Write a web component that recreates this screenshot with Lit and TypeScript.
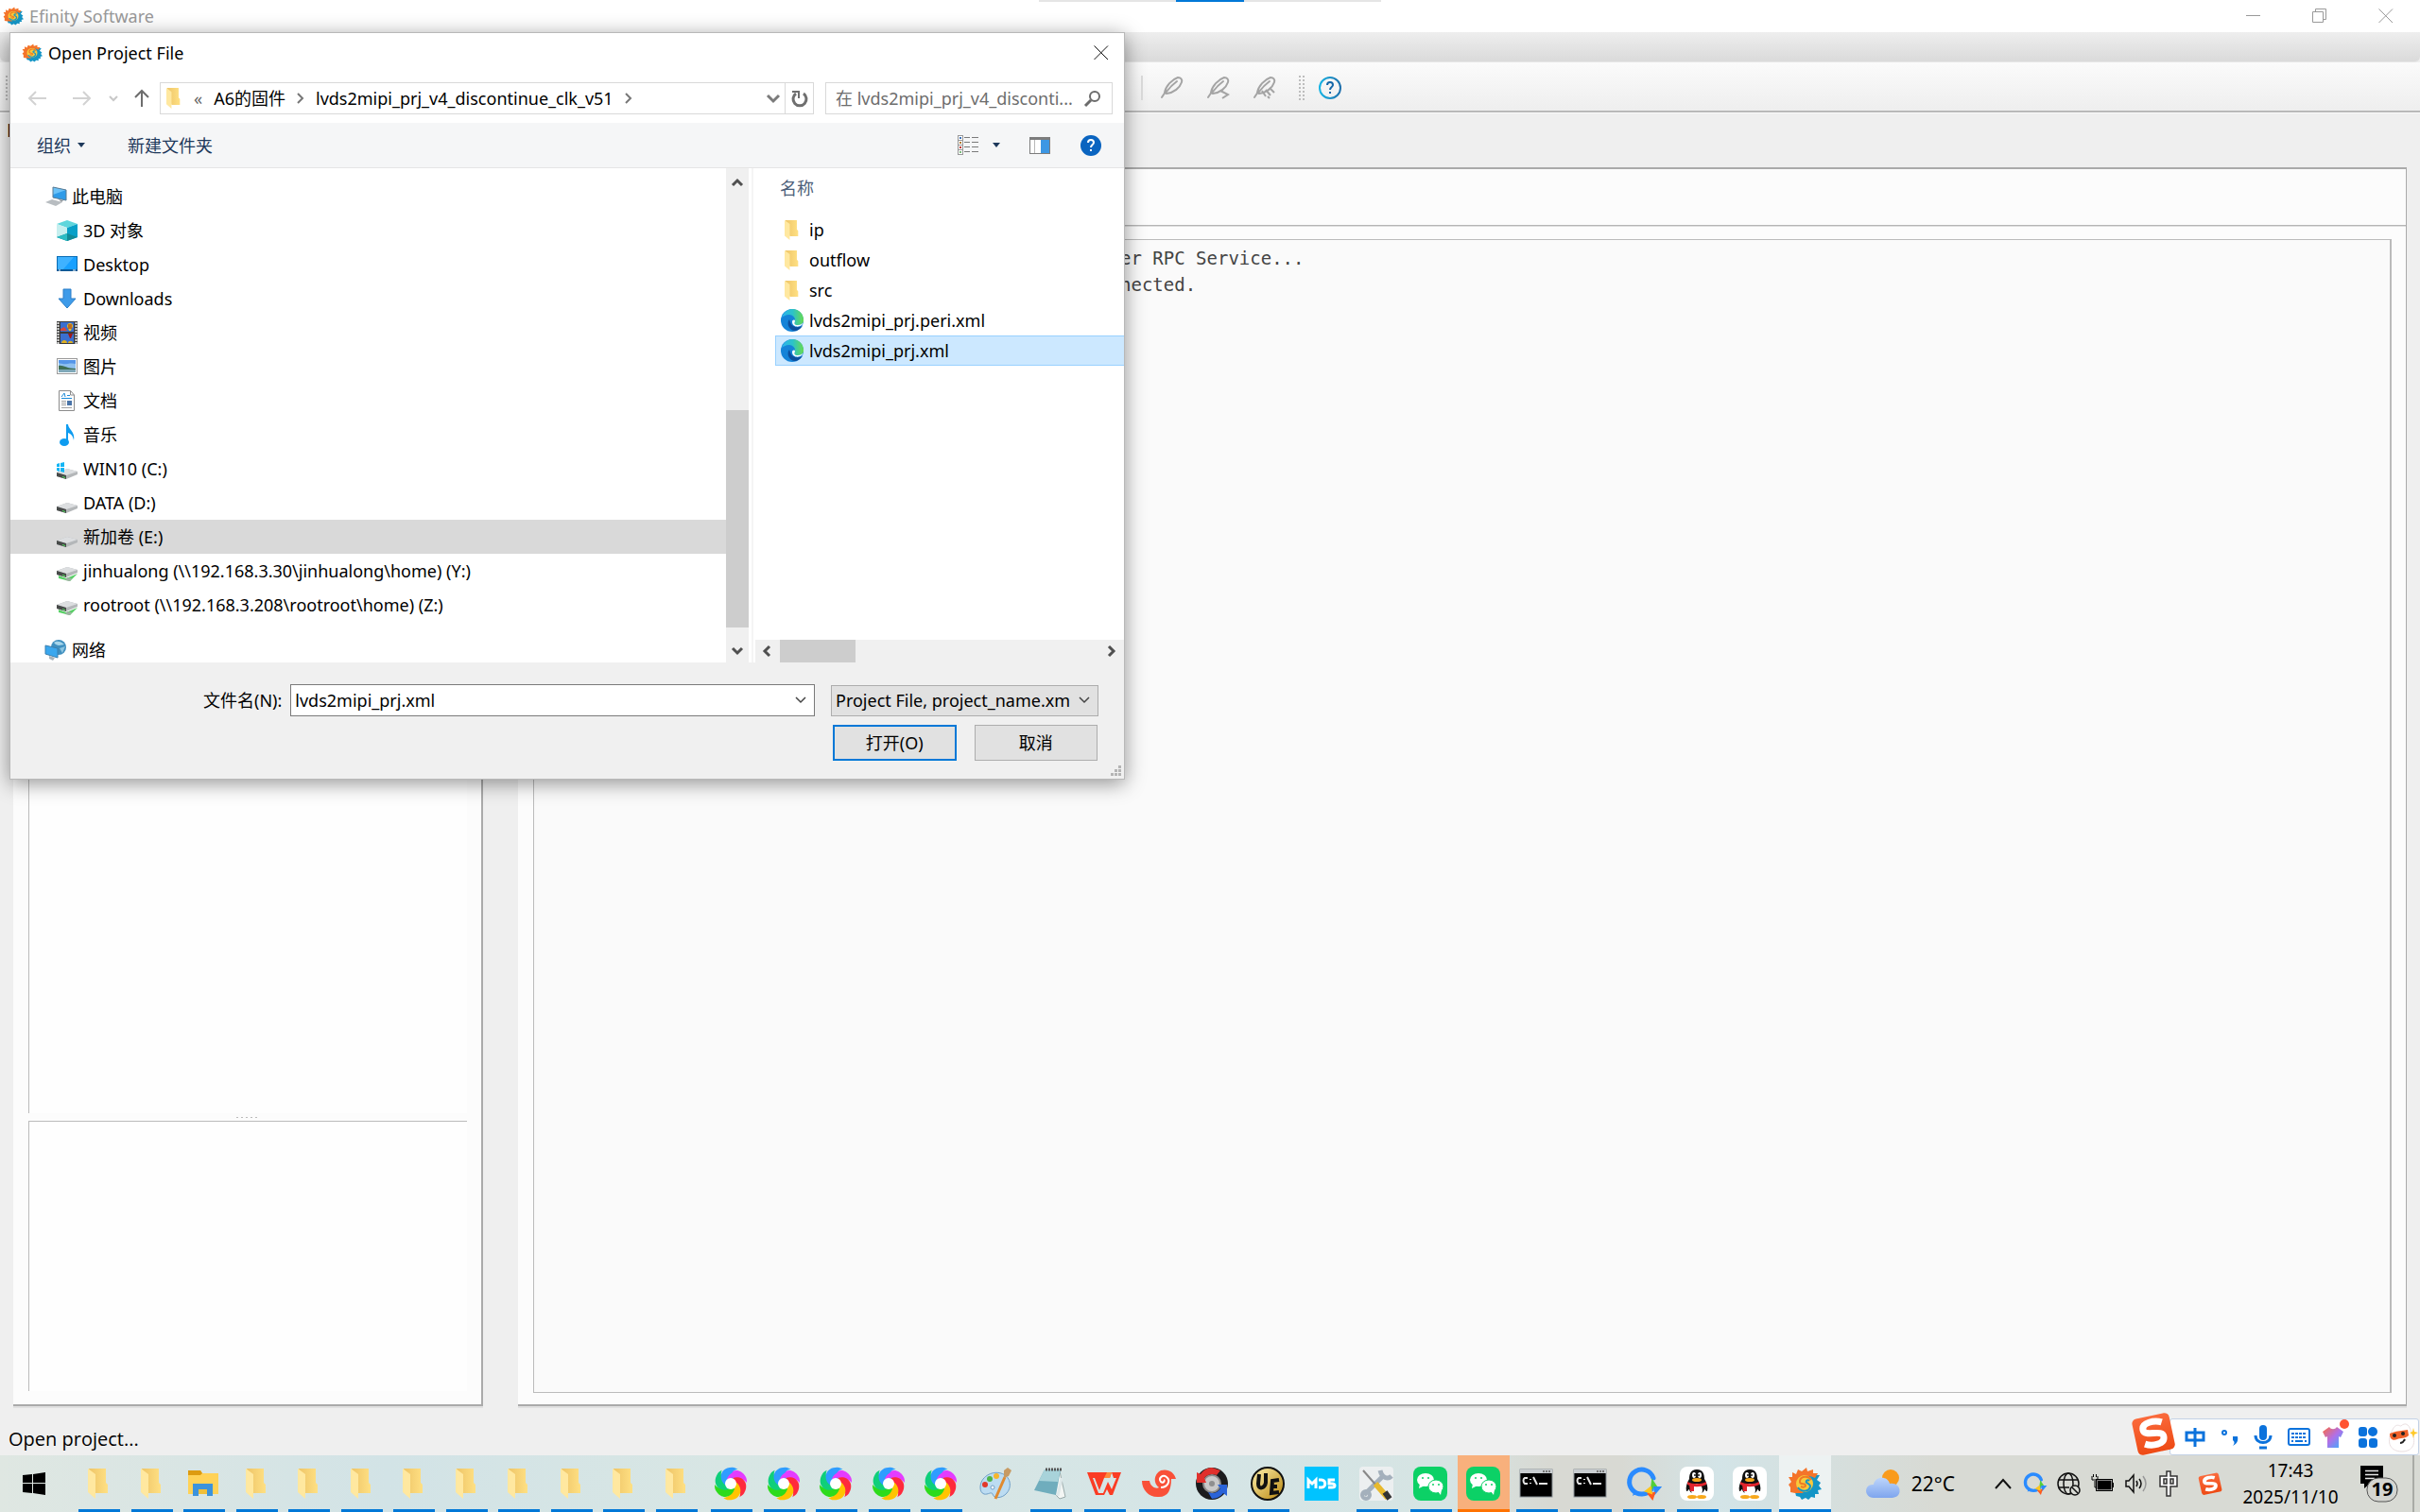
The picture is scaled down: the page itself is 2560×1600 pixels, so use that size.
import { LitElement, html, svg, css, type TemplateResult } from "lit";
import { customElement, state } from "lit/decorators.js";
import { classMap } from "lit/directives/class-map.js";

type Glyph = [number, number, TemplateResult];

const drive = svg`
  <path d="M0 16 L11 12 L22 15 V18 L10 23 L0 20 Z" fill="#b4b7b9"/>
  <path d="M0 16 L11 12 L22 15 L10 19 Z" fill="#dcdee0"/>
  <path d="M0 16 L10 19 V23 L0 20 Z" fill="#474a49"/>
  <path d="M6 20 L9 21 V22 L6 21 Z" fill="#4fe05a"/>`;

const petals = ["#e43cff", "#ff2a3c", "#ffc400", "#2edb1c", "#0fcf7a", "#2f9dff"];

const bubble = svg`
  <path d="M27 24 A13 13 0 1 1 29 12" fill="none" stroke="#2a8bff" stroke-width="5" stroke-linecap="round"/>
  <path d="M9 25 L7 31 L14 27 Z" fill="#2a8bff"/>
  <path d="M28 15 L32 21 L27 23 Z" fill="#53cf3a" stroke="#53cf3a" stroke-width="2"/>
  <path d="M36 22 L31 28 L30 22 Z" fill="#2a8bff" stroke="#2a8bff" stroke-width="2"/>
  <path d="M28 34 L24 29 L30 28 Z" fill="#ff5a1f" stroke="#ff5a1f" stroke-width="2"/>
  <path d="M21 26 L26 22 L27 28 Z" fill="#ffc61a" stroke="#ffc61a" stroke-width="2"/>`;

const feather = svg`
  <path d="M1 22 L5 16 M4 17 C5 10 12 3 18 1 C21 1 23 3 22 6 C20 12 14 17 6 18 Z M6 16 C9 12 13 8 17 5"
    fill="none" stroke="#a4a4a4" stroke-width="2" stroke-linecap="round" stroke-linejoin="round"/>`;

const sogou = svg`
  <g transform="rotate(-12 24 23)">
    <rect x="4" y="4" width="40" height="39" rx="5" fill="url(#g-sogou)"/>
    <path d="M35 13 C28 9 14 9 14 17 C14 25 34 20 34 28 C34 37 20 36 13 32" fill="none" stroke="#fff" stroke-width="7"/>
  </g>`;

const glyphs: Record<string, Glyph> = {
  efinity: [36, 36, svg`
    <path d="M34 9 L31 14 L35 17 L33 20 L36 24 L32 25 L33 29 L29 29 L29 33 L25 32 L22 35 L19 33 L15 35 L13 32 L9 31 L8 27 L20 8 Z" fill="#1495c6"/>
    <path d="M3 27 L3 22 L1 19 L4 16 L1 11 L5 11 L5 6 L9 8 L11 3 L15 5 L20 1 L21 5 L27 3 L27 7 L32 7 L29 12 C22 8 14 10 12 16 C11 22 13 25 17 28 L8 28 Z" fill="#f4742a"/>
    <circle cx="18" cy="18" r="9" fill="#f8c93c"/>
    <path d="M25 14 C22 9 14 10 13 15 C12 20 19 17 19 20 C19 22 16 22 14 21" fill="none" stroke="#ee7a24" stroke-width="2"/>
    <path d="M11 22 C14 27 23 27 24 21 C24 17 18 18 20 15 C21 14 22 14 23 15" fill="none" stroke="#1495c6" stroke-width="2"/>`],
  minimize: [16, 16, svg`<path d="M0 7.500 H15" stroke="#999"/>`],
  restore: [16, 16, svg`<path d="M.5 3.500 H11.500 V14.500 H.5 Z M3.500 3 V.5 H14.500 V11.500 H12" fill="none" stroke="#999"/>`],
  closeGrey: [16, 16, svg`<path d="M.5 .5 L15 15 M15 .5 L.5 15" stroke="#999"/>`],
  close: [16, 16, svg`<path d="M.5 .5 L15 15 M15 .5 L.5 15" stroke="#111"/>`],
  feather: [24, 24, feather],
  featherMinus: [24, 24, svg`${feather}<path d="M14 15 L22 19 L16 23" fill="none" stroke="#a4a4a4" stroke-width="2"/>`],
  featherLines: [24, 24, svg`${feather}<path d="M9 15 L13 21 M13 14 L18 20 M17 12 L22 17 M15 21 L17 23" fill="none" stroke="#a4a4a4" stroke-width="2"/>`],
  helpRing: [24, 24, svg`<circle cx="12" cy="12" r="11" fill="none" stroke="url(#g-ring)" stroke-width="2"/>
    <path d="M9 9 C9 5 15 5 15 9 C15 11 12 11 12 14" fill="none" stroke="#1466a8" stroke-width="2"/><rect x="11" y="16" width="2" height="2" fill="#1466a8"/>`],
  back: [20, 16, svg`<path d="M19 8 H2 M8 1 L1 8 L8 15" fill="none" stroke="#d2d2d2" stroke-width="2"/>`],
  forward: [20, 16, svg`<path d="M1 8 H18 M12 1 L19 8 L12 15" fill="none" stroke="#d2d2d2" stroke-width="2"/>`],
  recent: [10, 8, svg`<path d="M1 2 L5 6 L9 2" fill="none" stroke="#c8c8c8" stroke-width="2"/>`],
  up: [16, 18, svg`<path d="M8 18 V2 M1 8 L8 1 L15 8" fill="none" stroke="#6d6d6d" stroke-width="2"/>`],
  chevRight: [8, 12, svg`<path d="M1 1 L6 6 L1 11" fill="none" stroke="#777" stroke-width="2"/>`],
  chevDown: [14, 10, svg`<path d="M1 2 L7 8 L13 2" fill="none" stroke="#7b7b7b" stroke-width="3"/>`],
  comboDown: [12, 8, svg`<path d="M1 1 L6 6 L11 1" fill="none" stroke="#444" stroke-width="1.500"/>`],
  refresh: [18, 18, svg`<path d="M13 4 A7 7 0 1 1 5 4" fill="none" stroke="#6f6f6f" stroke-width="3"/><path d="M1 2 H8 V9" fill="none" stroke="#6f6f6f" stroke-width="2"/>`],
  search: [18, 18, svg`<circle cx="11" cy="7" r="5" fill="none" stroke="#6b6b6b" stroke-width="2"/><path d="M7 11 L1 17" stroke="#6b6b6b" stroke-width="3"/>`],
  caret: [10, 6, svg`<path d="M1 0 H9 L5 5 Z" fill="#1e395b"/>`],
  view: [22, 22, svg`<rect x=".5" y=".5" width="5" height="20" fill="#fff" stroke="#989898"/>
    <path d="M1 5.500 H5 M1 10.500 H5 M1 15.500 H5" stroke="#989898"/>
    <rect x="2" y="2" width="2" height="2" fill="#3f73b8"/><rect x="2" y="7" width="2" height="2" fill="#b07a2c"/><rect x="2" y="12" width="2" height="2" fill="#c03028"/><rect x="2" y="17" width="2" height="2" fill="#7ab97a"/>
    <path d="M7 2.500 H13 M15 2.500 H22 M7 7.500 H13 M15 7.500 H22 M7 12.500 H13 M15 12.500 H22 M7 17.500 H13 M15 17.500 H22" stroke="#7a7a7a"/>`],
  pane: [22, 18, svg`<rect x=".5" y=".5" width="21" height="17" fill="#fff" stroke="#7c7c7c"/><rect x="0" y="0" width="22" height="3" fill="#7c7c7c"/><path d="M5.500 3 V17" stroke="#b8b8b8"/><rect x="12" y="3" width="9" height="14" fill="#3c97e4"/>`],
  help: [22, 22, svg`<circle cx="11" cy="11" r="11" fill="#0a64c0"/><path d="M8 8 C8 4 14 4 14 8 C14 10 11 10 11 13" fill="none" stroke="#fff" stroke-width="2"/><rect x="10" y="15" width="2" height="2" fill="#fff"/>`],
  folder: [22, 32, svg`<path d="M1 0 H19 V15 L21 17 V26 H8 Z" fill="url(#g-folder)"/><path d="M0 0 L8 6 V32 L0 25 Z" fill="#ffe8a0"/>`],
  pc: [24, 22, svg`<path d="M8 1 L22 4 V15 L8 12 Z" fill="#2f9be8"/><path d="M8 1 L22 4 L8 9 Z" fill="#6cc2f7"/><path d="M8 1 L22 4 V15 L8 12 Z" fill="none" stroke="#5b7b93"/><path d="M0 17 L7 14 L18 17 L11 21 Z" fill="#b8bdc1"/><path d="M14 14 L19 15 L17 17 Z" fill="#8f969b"/>`],
  cube: [22, 22, svg`<path d="M0 4 L11 0 L22 4 L11 8 Z" fill="#5fd6dc"/><path d="M0 4 L11 8 V22 L0 18 Z" fill="#c6efef"/><path d="M22 4 L11 8 V22 L22 18 Z" fill="#08a0c8"/><path d="M0 18 L11 14 L22 18 L11 22 Z" fill="#128a96"/><path d="M0 18 L11 14 V22 Z" fill="#2bbcc4"/>`],
  desktop: [22, 18, svg`<rect x=".5" y=".5" width="21" height="15" fill="#18a0ff" stroke="#0a6cb4"/><path d="M1 1 H18 L6 15 H1 Z" fill="#3fb2ff"/><rect x="0" y="14" width="22" height="2" fill="#0a5a98"/><path d="M2 15 H4 M17 15 H20" stroke="#fff"/>`],
  download: [22, 20, svg`<path d="M7 0 H15 V10 H20 L11 20 L2 10 H7 Z" fill="#3e9be9" stroke="#2c7fc8"/>`],
  video: [22, 24, svg`<rect width="22" height="24" fill="#3c3c3c"/><path d="M1.500 1 V24 M20.500 1 V24" stroke="#e8e8e8" stroke-width="2" stroke-dasharray="2 1"/><rect x="4" y="1" width="14" height="10" fill="#3a6fd0"/><rect x="4" y="13" width="14" height="10" fill="#3a6fd0"/><path d="M11 5 C11 1 17 1 17 5 C17 7 15 8 15 10 H13 C13 8 11 7 11 5 Z" fill="#e8c020"/><path d="M13 3 V8 M15 3 V8" stroke="#a01818"/><path d="M4 8 L8 6 L11 10 H4 Z" fill="#d8483a"/><path d="M12 13 H17 L15 18 H14 Z" fill="#a01818"/><path d="M5 23 C5 19 11 19 11 23 Z M12 23 C12 20 17 20 17 23 Z" fill="#e0b020"/>`],
  picture: [22, 18, svg`<rect x=".5" y=".5" width="21" height="16" fill="#fff" stroke="#9a9a9a"/><rect x="2" y="2" width="18" height="13" fill="#8ec0f0"/><path d="M2 2 H20 V6 C14 4 8 8 2 5 Z" fill="#5595e8"/><path d="M2 8 C7 7 10 11 20 11 V12 H2 Z" fill="#3f6f55"/><path d="M2 12 H20 V15 H2 Z" fill="#7fa8b8"/>`],
  doc: [22, 22, svg`<path d="M2.500 .5 H14.500 L18.500 5 V21.500 H2.500 Z" fill="#fff" stroke="#8c8c8c"/><path d="M14.500 .5 V5 H18.500" fill="none" stroke="#8c8c8c"/><path d="M5 7 L8 3 L9 7 M11 5.500 H14 M5 8.500 H16" stroke="#1c8ad8" fill="none"/><path d="M5 11.500 H10 M5 13.500 H10 M5 15.500 H10 M5 18.500 H16" stroke="#a0a0a0"/><rect x="11" y="11" width="5" height="5" fill="#4a74a8"/>`],
  music: [22, 24, svg`<ellipse cx="8" cy="20" rx="5" ry="4" fill="#0e9cf0"/><path d="M10 20 V1 H12 C12 6 20 9 18 18 C17 13 15 11 12 10 V20 Z" fill="#0e9cf0"/>`],
  drive: [22, 24, drive],
  driveWin: [22, 24, svg`${drive}<path d="M0 7 L3 6 V10 H0 Z M4 6 L8 5 V10 H4 Z M0 11 H3 V15 L0 14 Z M4 11 H8 V16 L4 15 Z" fill="#12b5f5"/>`],
  driveNet: [22, 24, svg`<g transform="translate(0 -4)">${drive}</g><path d="M2 17 L10 20 L22 15 L14 23 L2 20 Z" fill="#58cf66"/><path d="M11 19 L16 20 L14 23 L9 22 Z" fill="#9fb0a3"/>`],
  network: [22, 22, svg`<circle cx="14" cy="8" r="8" fill="#3f8fbf"/><path d="M9 3 C13 0 18 3 20 5 C17 5 13 8 9 3 Z" fill="#a6d5ea"/><path d="M15 9 L21 7 L18 14 Z" fill="#8cc4e0"/><path d="M0 6 L13 9 V19 L0 15 Z" fill="#3aa7ee" stroke="#3a7fae"/><path d="M4 17 L10 19 L8 22 L4 20 Z" fill="#a9b3ba"/>`],
  edge: [24, 24, svg`<circle cx="12" cy="12" r="12" fill="#1583d8"/><path d="M1 9 C3 2 9 0 12 0 C20 0 24 6 24 12 C24 16 20 17 17 17 C14 17 14 15 15 13 C16 9 12 6 9 6 C5 6 2 8 1 9 Z" fill="url(#g-edge)"/><path d="M9 11 C5 16 10 24 16 23 C20 22 22 19 23 18 C19 20 12 20 10 14 Z" fill="#0d4f9e"/><path d="M12 14 C12 11 15 11 15 13 C14 15 14 17 18 17 C20 17 22 16 23 15 C23 19 13 21 12 14 Z" fill="#fff"/>`],
  scrollUp: [12, 10, svg`<path d="M1 8 L6 3 L11 8" fill="none" stroke="#505050" stroke-width="3"/>`],
  scrollDown: [12, 10, svg`<path d="M1 2 L6 7 L11 2" fill="none" stroke="#505050" stroke-width="3"/>`],
  scrollLeft: [10, 12, svg`<path d="M8 1 L3 6 L8 11" fill="none" stroke="#505050" stroke-width="3"/>`],
  scrollRight: [10, 12, svg`<path d="M2 1 L7 6 L2 11" fill="none" stroke="#505050" stroke-width="3"/>`],
  grip: [12, 12, svg`<path d="M8 0 h3 v3 h-3z M8 4 h3 v3 h-3z M4 4 h3 v3 h-3z M0 8 h3 v3 h-3z M4 8 h3 v3 h-3z M8 8 h3 v3 h-3z" fill="#b4b4b4"/>`],
  windows: [24, 24, svg`<path d="M0 3 L10 2 V11 H0 Z M11 2 L24 0 V11 H11 Z M0 12 H10 V22 L0 21 Z M11 12 H24 V24 L11 22 Z" fill="#000"/>`],
  explorer: [32, 28, svg`<path d="M0 0 H13 L15 3 H32 V25 H0 Z" fill="#ffd257"/><path d="M0 0 H13 L15 3 L13 5 H0 Z" fill="#dd9b10"/><path d="M5 27 V14 H26 V27 H20 V20 H11 V27 Z" fill="#3c93dc"/><path d="M11 25 V20 H20 V25 Z" fill="#f0bf3a"/>`],
  pinwheel: [36, 36, svg`${petals.map((c, i) => svg`<path transform=${`rotate(${i * 60} 18 18)`} d="M14 13 C16 3 28 0 34 11 C35 13 35 15 35 17 C31 12 26 12 23 20 Z" fill=${c}/>`)}${petals.map((c, i) => svg`<path transform=${`rotate(${i * 60} 18 18)`} d="M14 13 C17 6 24 3 30 8 C25 8 20 9 18 14 Z" fill=${c}/>`)}<circle cx="18" cy="18" r="6" fill="#fff"/>`],
  paint: [36, 36, svg`<path d="M2 22 C2 11 14 4 24 7 C34 10 36 21 30 28 C25 34 16 34 15 29 C14 26 10 30 6 29 C3 28 2 25 2 22 Z" fill="#bcdcf2" stroke="#6f9fc8"/><circle cx="7" cy="19" r="3" fill="#e2392c"/><circle cx="12" cy="13" r="3" fill="#4fb548"/><circle cx="19" cy="10" r="3" fill="#f6b52c"/><circle cx="15" cy="22" r="2" fill="#fff" stroke="#6f9fc8"/><path d="M18 34 L28 11" stroke="#e08a30" stroke-width="3"/><path d="M27 12 L27 4 L31 1 L35 4 L32 10 Z" fill="#c79a62"/>`],
  notepad: [36, 36, svg`<path d="M28 5 L34 32 L28 34 L22 28 Z" fill="#f3f6f4" stroke="#9aa"/><path d="M12 3 H29 L24 30 L1 25 Z" fill="#6fadbd"/><path d="M12 3 H29 L26 16 L6 15 Z" fill="#a8d3da"/><path d="M13 3 H30" stroke="#555" stroke-width="3" stroke-dasharray="2 1"/><path d="M26 31 L30 12" stroke="#dfe9ea" stroke-width="3"/>`],
  wps: [36, 36, svg`<path d="M0 6 H26 L24 12 H18 L13 25 L8 12 H6 L12 28 H17 L22 16 L26 24 L31 12 H28 L26 6 H36 L27 30 H24 L21 24 L18 30 H9 Z" fill="#fb3c24"/><path d="M18 12 H24 L26 6 H21 Z" fill="#ff8a3c"/>`],
  snail: [36, 36, svg`<path d="M0 15 H8 C9 22 16 24 18 22 C12 18 12 8 20 4 C28 2 34 6 36 13 H31 C31 24 28 32 18 32 C8 33 0 25 0 15 Z" fill="#f95038"/><path d="M20 22 C27 22 31 15 26 11 C22 8 17 12 20 16 C22 18 25 15 23 14" fill="none" stroke="#fff" stroke-width="2"/>`],
  tyre: [36, 36, svg`<circle cx="17" cy="18" r="17" fill="#1b1b1d"/><circle cx="17" cy="18" r="9" fill="#c9c9c9" stroke="#8b8b8b" stroke-width="2"/><circle cx="17" cy="18" r="3" fill="#8f8f8f"/><path d="M17 1 C11 1 7 5 5 8 L1 6 V17 H11 L9 12 C12 8 18 7 22 9 L26 4 Z" fill="#e0302c"/><path d="M17 34 C22 34 27 31 29 28 L33 31 V19 H23 L26 23 C23 28 18 29 13 27 Z" fill="#2a63d8"/>`],
  ue: [36, 36, svg`<circle cx="18" cy="18" r="17" fill="url(#g-ue)" stroke="#111" stroke-width="2"/><path d="M9 8 L8 18 C8 25 15 23 16 17 V7" fill="none" stroke="#111" stroke-width="4"/><path d="M30 14 L23 15 L22 28 L30 27 M22 21 H28" fill="none" stroke="#111" stroke-width="4"/>`],
  md5: [36, 36, svg`<rect width="36" height="36" fill="#00c3ff"/><path d="M4 23 V14 L8 18 L12 14 V23 M15 14 H18 C23 14 23 22 18 22 H15 M32 14 H26 V18 H29 C33 18 33 22 29 22 H25" fill="none" stroke="#fff" stroke-width="3"/>`],
  tools: [36, 36, svg`<rect width="36" height="36" rx="4" fill="#eceff0"/><path d="M5 30 L26 9" stroke="#a4b0bc" stroke-width="5"/><path d="M22 4 C24 12 30 14 34 10" fill="none" stroke="#a4b0bc" stroke-width="5"/><circle cx="7" cy="30" r="4" fill="none" stroke="#a4b0bc" stroke-width="4"/><path d="M4 4 L18 20" stroke="#888" stroke-width="2"/><path d="M17 18 L30 33" stroke="#e8b92c" stroke-width="6"/><path d="M27 27 L32 34" stroke="#333" stroke-width="6"/>`],
  wechat: [36, 36, svg`<rect width="36" height="36" rx="8" fill="#0cd166"/><ellipse cx="13" cy="14" rx="9" ry="7" fill="#fff"/><path d="M7 18 L6 23 L12 20 Z" fill="#fff"/><ellipse cx="24" cy="21" rx="8" ry="7" fill="#fff" stroke="#0cd166"/><path d="M26 26 L29 30 L30 24 Z" fill="#fff"/><circle cx="10" cy="12" r="1" fill="#0cd166"/><circle cx="16" cy="12" r="1" fill="#0cd166"/><circle cx="21" cy="19" r="1" fill="#0cd166"/><circle cx="27" cy="19" r="1" fill="#0cd166"/>`],
  cmd: [36, 36, svg`<rect x="1" y="3" width="34" height="29" fill="#000" stroke="#8a9298"/><rect x="1" y="3" width="34" height="4" fill="#c8cdd0"/><path d="M25 5 H33" stroke="#777" stroke-width="2" stroke-dasharray="2 1"/><path d="M9 12 H6 C4 13 4 16 6 18 H9 M12 13 V14 M12 17 V18 M15 11 L19 19 M21 18 H30" fill="none" stroke="#e4e4e4" stroke-width="2"/>`],
  wecom: [36, 36, bubble],
  qq: [36, 36, svg`<rect width="36" height="36" rx="8" fill="#fff"/><path d="M18 3 C11 3 10 9 10 13 C7 18 6 22 7 26 C9 26 9 24 10 24 C11 31 25 31 26 24 C27 24 27 26 29 26 C30 22 29 18 26 13 C26 9 25 3 18 3 Z" fill="#111"/><ellipse cx="18" cy="25" rx="6" ry="7" fill="#fff"/><path d="M8 16 C14 19 22 19 28 16 V19 C22 22 14 22 8 19 Z" fill="#e0242c"/><path d="M10 19 H15 V26 H11 Z" fill="#e0242c"/><ellipse cx="15" cy="9" rx="2" ry="3" fill="#fff"/><ellipse cx="21" cy="9" rx="2" ry="3" fill="#fff"/><circle cx="16" cy="9" r="1" fill="#111"/><circle cx="20" cy="9" r="1" fill="#111"/><ellipse cx="18" cy="14" rx="5" ry="2" fill="#f7a81c"/><ellipse cx="13" cy="32" rx="5" ry="2" fill="#f7a81c"/><ellipse cx="23" cy="32" rx="5" ry="2" fill="#f7a81c"/>`],
  weather: [36, 30, svg`<circle cx="26" cy="9" r="9" fill="#f99b1c"/><path d="M8 30 C-3 29 -2 15 8 16 C9 7 23 6 25 15 C37 13 40 29 28 30 Z" fill="url(#g-cloud)"/>`],
  trayUp: [18, 12, svg`<path d="M1 11 L9 2 L17 11" fill="none" stroke="#111" stroke-width="2"/>`],
  globe: [24, 24, svg`<g fill="none" stroke="#111" stroke-width="1.500"><circle cx="12" cy="12" r="11"/><ellipse cx="12" cy="12" rx="5" ry="11"/><path d="M2 8 H22 M2 16 H13"/></g><circle cx="19" cy="19" r="5" fill="#d9dbd5" stroke="#111" stroke-width="1.500"/><path d="M16 16 L22 22" stroke="#111" stroke-width="1.500"/>`],
  battery: [24, 20, svg`<rect x="6" y="6" width="16" height="11" fill="#000" stroke="#fff" stroke-width="1"/><rect x="5.500" y="5.500" width="17" height="12" fill="none" stroke="#000"/><rect x="23" y="9" width="1" height="5" fill="#000"/><path d="M1 2 V6 H7 V2 M2.500 0 V3 M5.500 0 V3 M4 7 V14 H6" fill="none" stroke="#000"/>`],
  speaker: [24, 20, svg`<path d="M1 7 H4 L9 1 V19 L4 13 H1 Z" fill="none" stroke="#111" stroke-width="1.500"/><path d="M12 7 Q14 10 12 13 M15 5 Q19 10 15 15" fill="none" stroke="#111" stroke-width="1.500"/><path d="M19 2 Q25 10 19 18" fill="none" stroke="#999" stroke-width="1.500"/>`],
  imeTray: [20, 28, svg`<path d="M8 1 H12 V6 H19 V17 H12 V27 H8 V17 H1 V6 H8 Z" fill="#fff" stroke="#333" stroke-width="1.500"/><path d="M5 9 H8 V14 H5 Z M12 9 H15 V14 H12 Z" fill="#d9dbd5" stroke="#333" stroke-width="1.500"/>`],
  sogou: [48, 46, sogou],
  notice: [40, 38, svg`<path d="M0 0 H24 V19 H10 L4 24 V19 H0 Z" fill="#000"/><path d="M5 5.500 H19 M5 9.500 H19 M5 13.500 H15" stroke="#e8e8e8" stroke-width="1.500"/><rect x="7" y="13" width="32" height="25" rx="12" fill="#d4d5d0" stroke="#555"/>`],
  imeZh: [22, 22, svg`<path d="M2 6 H20 V14 H2 Z M11 1 V21" fill="none" stroke="#0b72dc" stroke-width="3"/>`],
  punct: [18, 18, svg`<circle cx="3" cy="4" r="2" fill="none" stroke="#0b72dc" stroke-width="2"/><path d="M12 8 H17 C18 13 16 16 12 18 C14 15 14 14 12 12 Z" fill="#0b72dc"/>`],
  mic: [18, 26, svg`<rect x="5" y="0" width="8" height="16" rx="4" fill="#0b72dc"/><path d="M1 11 C1 21 17 21 17 11 M5 24 H13" fill="none" stroke="#0b72dc" stroke-width="3"/>`],
  keyboard: [24, 20, svg`<rect x="1" y="1" width="22" height="17" rx="2" fill="none" stroke="#0b72dc" stroke-width="2"/><path d="M4 6 H20 M4 10 H20" stroke="#0b72dc" stroke-width="2" stroke-dasharray="3 1"/><path d="M4 14 H6 M8 14 H16 M18 14 H20" stroke="#0b72dc" stroke-width="2"/>`],
  shirt: [30, 32, svg`<path d="M1 12 L8 7 C10 10 14 10 16 7 L23 12 L20 18 L18 17 V29 H6 V17 L4 18 Z" fill="url(#g-shirt)"/><circle cx="24" cy="4" r="5" fill="#ff5330"/>`],
  apps: [20, 22, svg`<rect x="0" y="0" width="9" height="10" rx="3" fill="#0b72dc"/><circle cx="15" cy="5" r="5" fill="#0b72dc"/><rect x="0" y="12" width="9" height="10" rx="3" fill="#0b72dc"/><rect x="11" y="12" width="9" height="10" rx="3" fill="#0b72dc"/>`],
  mascot: [32, 32, svg`<path d="M4 10 C8 0 12 4 14 4 C18 0 22 2 24 8 C32 22 26 31 15 31 C3 31 -2 22 4 10 Z" fill="#fff" stroke="#eadfe0"/><path d="M2 12 C8 9 16 9 21 8 L22 14 C18 18 12 16 10 18 C5 20 2 18 2 12 Z" fill="#f0622a"/><circle cx="7" cy="14" r="2" fill="#222"/><circle cx="16" cy="12" r="2" fill="#222"/><path d="M13 22 C16 22 17 20 18 18" fill="none" stroke="#222" stroke-width="2"/><path d="M27 6 L28 10 L32 11 L28 13 L27 17 L26 13 L23 11 L26 10 Z" fill="#ffc928"/>`],
};

const icon = (name: string, width?: number, height?: number) => {
  const [w, h, body] = glyphs[name];
  return html`<svg class="icon" width=${width ?? w} height=${height ?? h} viewBox=${`0 0 ${w} ${h}`} preserveAspectRatio="none" aria-hidden="true">${body}</svg>`;
};

interface Place { icon: string; label: string; top?: boolean; gap?: boolean }

const places: Place[] = [
  { icon: "pc", label: "此电脑", top: true },
  { icon: "cube", label: "3D 对象" },
  { icon: "desktop", label: "Desktop" },
  { icon: "download", label: "Downloads" },
  { icon: "video", label: "视频" },
  { icon: "picture", label: "图片" },
  { icon: "doc", label: "文档" },
  { icon: "music", label: "音乐" },
  { icon: "driveWin", label: "WIN10 (C:)" },
  { icon: "drive", label: "DATA (D:)" },
  { icon: "drive", label: "新加卷 (E:)" },
  { icon: "driveNet", label: "jinhualong (\\\\192.168.3.30\\jinhualong\\home) (Y:)" },
  { icon: "driveNet", label: "rootroot (\\\\192.168.3.208\\rootroot\\home) (Z:)" },
  { icon: "network", label: "网络", top: true, gap: true },
];

const files = [
  { name: "ip", folder: true },
  { name: "outflow", folder: true },
  { name: "src", folder: true },
  { name: "lvds2mipi_prj.peri.xml", folder: false },
  { name: "lvds2mipi_prj.xml", folder: false },
];

interface Task { icon: string; mode?: "idle" | "alert" | "active" }

const folder: Task = { icon: "folder" };
const taskGroups: { name: string; tasks: Task[] }[] = [
  { name: "folders", tasks: [folder, folder, { icon: "explorer" }, ...Array<Task>(9).fill(folder)] },
  { name: "browsers", tasks: Array<Task>(5).fill({ icon: "pinwheel" }) },
  {
    name: "apps",
    tasks: [
      { icon: "paint", mode: "idle" }, { icon: "notepad" }, { icon: "wps" }, { icon: "snail" }, { icon: "tyre" },
      { icon: "ue" }, { icon: "md5", mode: "idle" }, { icon: "tools" }, { icon: "wechat" },
    ],
  },
  { name: "alerts", tasks: [{ icon: "wechat", mode: "alert" }] },
  { name: "chats", tasks: [{ icon: "cmd" }, { icon: "cmd" }, { icon: "wecom" }, { icon: "qq" }, { icon: "qq" }] },
  { name: "current", tasks: [{ icon: "efinity", mode: "active" }] },
];

@customElement("app-root")
export class AppRoot extends LitElement {
  @state() private place = 10;
  @state() private file = 4;

  static styles = css`
    :host {
      display: block;
      font-family: "Noto Sans", "Noto Sans CJK SC", sans-serif;
      font-size: 18px;
      line-height: 24px;
      color: #000;
    }
    * { box-sizing: border-box; }
    button, input, select {
      font: inherit;
      color: inherit;
      margin: 0;
      padding: 0;
      border: 0;
      border-radius: 0;
      background: none;
    }
    ul { list-style: none; margin: 0; padding: 0; }
    h1, h2 { margin: 0; font: inherit; }
    .icon { display: block; flex: none; overflow: visible; }
    .defs { position: absolute; }
    .desktop { display: flex; flex-direction: column; height: 100vh; background: #efefef; position: relative; overflow: hidden; }

    .titlebar { display: flex; align-items: center; height: 34px; padding: 0 28px 0 3px; gap: 6px; background: #fff; color: #999; flex: none; }
    .titlebar h1 { flex: 1; }
    .window-buttons { display: flex; gap: 54px; }
    .window-buttons button { display: flex; width: 16px; }
    .snap { position: absolute; top: 0; left: 1099px; width: 362px; height: 2px; background: #e5e5e5; display: flex; justify-content: center; }
    .snap i { width: 72px; background: #0078d7; }
    .menubar { height: 32px; flex: none; background: linear-gradient(#eeeeee, #dadada); border-bottom: 1px solid #e6e6e6; border-radius: 0 0 6px 6px; }
    .toolbar { height: 53px; flex: none; display: flex; align-items: center; background: linear-gradient(#fbfbfb, #eeeeee); border-bottom: 2px solid #b9b9b9; padding: 2px 0 0 6px; }
    .handle { width: 6px; height: 26px; background: radial-gradient(circle at 1px 1px, #bdbdbd 1px, transparent 1px) 0 0 / 4px 4px; }
    .tools { display: flex; align-items: center; gap: 25px; margin-left: 1195px; padding-left: 19px; border-left: 2px solid #dcdcdc; height: 26px; }
    .toolbar button { display: flex; }
    .tools + .handle { margin: 0 15px 0 24px; }

    .dock-title { height: 58px; padding: 6px 7px; flex: none; font-size: 20px; border-top: 1px solid #fafafa; }
    .workspace { flex: 1; display: grid; grid-template-columns: 497px 1fr; gap: 37px; padding: 0 14px; min-height: 0; }
    .panel { background: #fcfcfc; border: solid #aaa; border-width: 2px 2px 2px 0; display: flex; flex-direction: column; min-height: 0; box-shadow: 0 2px 0 #e0e0e0; }
    .project { padding: 14px 15px 14px 16px; }
    .pane { flex: 1; background: #fefefe; border-left: 1px solid #bbb; }
    .pane-lower { flex: none; height: 286px; background: #fefefe; border: solid #bbb; border-width: 1px 0 0 1px; }
    .splitter { height: 8px; display: flex; justify-content: center; align-items: center; }
    .splitter i { width: 24px; height: 1px; background: repeating-linear-gradient(90deg, #bbb 0 2px, transparent 2px 5px); }
    .panel.console { border-right-width: 1px; }
    .console-head { height: 60px; border-bottom: 1px solid #b5b5b5; box-shadow: 0 1px 0 #ddd; }
    .log { flex: 1; margin: 14px 15px 12px 16px; background: #fafafa; border: solid #bbb; border-width: 1px 2px 1px 1px; padding: 5px 0 0 620px; font: 19px/28px "DejaVu Sans Mono", monospace; color: #444; }
    .log p { margin: 0; }
    .status { height: 52px; flex: none; padding: 21px 9px 0; font: 20px/28px "Open Sans", "Noto Sans", sans-serif; }

    .dialog { position: absolute; left: 10px; top: 34px; width: 1180px; background: #fff; border: 1px solid #b8b8b8; box-shadow: 0 4px 20px rgba(0, 0, 0, .42); display: flex; flex-direction: column; }
    .dialog-title { display: flex; align-items: center; height: 42px; padding: 0 16px 0 12px; gap: 6px; }
    .dialog-title h2 { flex: 1; }
    .dialog-title button { display: flex; }
    .nav { display: flex; align-items: center; height: 53px; padding: 0 12px 0 19px; }
    .nav button { display: flex; }
    .nav-steps { display: flex; align-items: center; width: 139px; gap: 19px; }
    .nav-steps button:nth-child(1) { margin-right: 7px; }
    .nav-steps button:nth-child(4) { margin-left: -2px; }
    .address { display: flex; align-items: center; flex: 1; height: 34px; border: 1px solid #d9d9d9; padding-left: 6px; }
    .crumbs { display: flex; align-items: center; flex: 1; gap: 12px; padding-left: 14px; white-space: nowrap; }
    .crumbs .more { color: #666; }
    .address .drop { margin-right: 5px; }
    .address .reload { height: 32px; width: 30px; align-items: center; justify-content: center; border-left: 1px solid #d9d9d9; }
    .find { display: flex; align-items: center; width: 304px; height: 34px; margin-left: 12px; border: 1px solid #d9d9d9; padding: 0 11px 0 10px; gap: 6px; }
    .find input { flex: 1; min-width: 0; text-overflow: ellipsis; }
    .find input::placeholder { color: #6d6d6d; opacity: 1; }
    .commands { display: flex; align-items: center; height: 48px; background: #f5f6f7; border-bottom: 1px solid #e5e5e5; color: #1e395b; padding: 0 24px 0 28px; }
    .commands button { display: flex; align-items: center; gap: 6px; }
    .commands .new { margin-left: 44px; flex: 1; }
    .commands .view { gap: 14px; }
    .commands .preview { margin: 0 32px 0 30px; }

    .browse { display: flex; height: 523px; }
    .tree { width: 757px; padding-top: 12px; overflow: hidden; }
    .tree li { display: flex; height: 36px; }
    .tree li.gap { margin-top: 12px; }
    .tree button { display: flex; align-items: center; gap: 6px; width: 100%; padding-left: 49px; text-align: left; }
    .tree .top button { padding-left: 37px; gap: 4px; }
    .tree .gap button { gap: 6px; }
    .tree .selected { background: #d9d9d9; }
    .vscroll { width: 24px; background: #f0f0f0; display: flex; flex-direction: column; align-items: center; padding: 10px 0 7px; }
    .vscroll .thumb { width: 24px; height: 230px; margin: 236px 0 auto; background: #cdcdcd; }
    .listing { flex: 1; min-width: 0; display: flex; flex-direction: column; border-left: 2px solid #f4f4f4; margin-left: 3px; }
    .files { border-collapse: collapse; width: 100%; table-layout: fixed; }
    .files-wrap { flex: 1; padding-left: 23px; }
    .files th { text-align: left; font-weight: 400; color: #4c607a; height: 49px; padding: 0 0 8px 5px; }
    .files td { padding: 0; height: 32px; }
    .files button { display: flex; align-items: center; gap: 6px; width: 100%; height: 32px; padding-left: 5px; border: 1px solid transparent; text-align: left; }
    .files .selected button { background: #cce8ff; border-color: #99d1ff; border-right: 0; }
    .file-icon { width: 24px; display: flex; justify-content: center; padding-right: 2px; }
    .file-icon.sheet { padding-right: 0; }
    .hscroll { height: 24px; margin-left: 2px; background: #f0f0f0; display: flex; align-items: center; justify-content: space-between; padding: 0 8px 0 7px; }
    .hscroll .thumb { width: 80px; height: 24px; margin-right: auto; margin-left: 9px; background: #cdcdcd; }

    .form { background: #f0f0f0; padding: 23px 27px 19px 204px; display: grid; grid-template-columns: auto 1fr 283px; align-items: center; row-gap: 9px; position: relative; }
    .form label { padding-right: 9px; white-space: nowrap; }
    .combo { display: flex; align-items: center; height: 34px; background: #fff; border: 1px solid #7a7a7a; padding: 0 8px 0 4px; margin-right: 17px; }
    .combo input { flex: 1; min-width: 0; }
    .combo button { display: flex; }
    .filter { display: grid; align-items: center; height: 33px; background: #e1e1e1; border: 1px solid #adadad; padding-right: 8px; grid-template-columns: 1fr 12px; gap: 7px; }
    .filter select { appearance: none; width: 100%; min-width: 0; height: 30px; padding-left: 4px; overflow: hidden; }
    .actions { grid-column: 3; display: grid; grid-template-columns: 1fr 1fr; gap: 19px; padding: 0 1px 0 2px; }
    .actions button { height: 38px; background: #e1e1e1; border: 1px solid #adadad; }
    .actions .primary { border: 2px solid #0078d7; }
    .grip { position: absolute; right: 2px; bottom: 2px; }

    .taskbar { height: 60px; flex: none; display: flex; background: linear-gradient(90deg, #dfe7e2 0, #d2e3e6 16%, #d8e6e4 30%, #d5e5e6 50%, #d6e4e3 60%, #d8d9d3 64%, #d8d9d3 67%, #d3e4e7 71%, #d4e2e3 73%, #d8dad4 80%, #d8dad4 100%); }
    .start { width: 83px; display: flex; align-items: center; padding-left: 24px; }
    .group { display: flex; justify-content: space-between; }
    .folders { width: 655px; }
    .browsers { width: 266px; margin-left: 14px; }
    .apps { width: 504px; margin-left: 14px; }
    .alerts { margin-left: 6px; }
    .chats { width: 270px; margin: 0 8px 0 7px; }
    .task { width: 44px; display: flex; align-items: center; justify-content: center; border: solid #0078d7; border-width: 0 0 3px; padding-top: 3px; }
    .task.idle { border-color: transparent; }
    .task.alert { width: 55px; background: #f8b07c; border-color: #ff7200; }
    .task.active { width: 55px; background: #edf2f2; }
    .group .task { padding-right: 2px; }
    .tray { margin-left: auto; display: flex; align-items: center; padding-right: 15px; gap: 12px; }
    .tray button { display: flex; align-items: center; }
    .tray .weather { gap: 12px; font-size: 21px; margin-right: 30px; }
    .tray .mode { margin-right: 9px; }
    .tray .clock { display: block; width: 108px; margin: 0 8px 0 6px; text-align: center; font-size: 19px; line-height: 28px; }
    .notice { position: relative; }
    .notice b { position: absolute; left: 7px; top: 13px; width: 32px; text-align: center; font-size: 20px; font-weight: 700; }
    .peek { width: 8px; border-left: 2px solid #a9aba6; }

    .ime { position: absolute; right: 1px; bottom: 60px; height: 39px; display: flex; align-items: center; gap: 17px; background: #fff; border: 1px solid #c3d2e6; border-radius: 3px; }
    .ime button { display: flex; }
    .ime .brand { margin: -8px -8px 0 -42px; }
    .ime .keys { margin-right: -5px; }
    .ime .dress { margin: -4px -8px 0 0; }
    .ime .more { margin-right: -6px; }
  `;

  private renderDefs() {
    return html`<svg class="defs" width="0" height="0" aria-hidden="true">
      <defs>
        <linearGradient id="g-folder" x1="0" x2="1"><stop offset="0" stop-color="#eec568" /><stop offset="1" stop-color="#ffe083" /></linearGradient>
        <linearGradient id="g-edge" x1="0" x2="1"><stop offset="0" stop-color="#2db4ee" /><stop offset=".5" stop-color="#2cc2c8" /><stop offset="1" stop-color="#68dc50" /></linearGradient>
        <linearGradient id="g-ring" x1="0" x2="1"><stop offset="0" stop-color="#18b4e4" /><stop offset="1" stop-color="#2070ac" /></linearGradient>
        <linearGradient id="g-ue" x1="0" x2="1" y2="1"><stop offset="0" stop-color="#fff2b0" /><stop offset="1" stop-color="#b8860c" /></linearGradient>
        <linearGradient id="g-cloud" x1="0" x2="0" y1="0" y2="1"><stop offset="0" stop-color="#bdd5fb" /><stop offset="1" stop-color="#7ea5ee" /></linearGradient>
        <linearGradient id="g-sogou" x1="0" x2="0" y1="0" y2="1"><stop offset="0" stop-color="#fa6a3c" /><stop offset="1" stop-color="#ee4a14" /></linearGradient>
        <linearGradient id="g-shirt" x1="0" x2="1" y1="0" y2="1"><stop offset="0" stop-color="#ff6a3c" /><stop offset=".5" stop-color="#b070e8" /><stop offset="1" stop-color="#30b4ff" /></linearGradient>
      </defs>
    </svg>`;
  }

  private renderMainWindow() {
    return html`
      <header class="titlebar">
        ${icon("efinity", 22, 20)}
        <h1>Efinity Software</h1>
        <div class="window-buttons">
          <button aria-label="Minimize">${icon("minimize")}</button>
          <button aria-label="Restore">${icon("restore")}</button>
          <button aria-label="Close">${icon("closeGrey")}</button>
        </div>
      </header>
      <div class="snap"><i></i></div>
      <div class="menubar"></div>
      <div class="toolbar">
        <span class="handle"></span>
        <div class="tools">
          <button aria-label="Edit">${icon("feather")}</button>
          <button aria-label="Edit next">${icon("featherMinus")}</button>
          <button aria-label="Edit all">${icon("featherLines")}</button>
        </div>
        <span class="handle"></span>
        <button aria-label="Help">${icon("helpRing")}</button>
      </div>
      <div class="dock-title">P</div>
      <main class="workspace">
        <section class="panel project">
          <div class="pane"></div>
          <div class="splitter"><i></i></div>
          <div class="pane-lower"></div>
        </section>
        <section class="panel console">
          <div class="console-head"></div>
          <div class="log"><p>er RPC Service...</p><p>nected.</p></div>
        </section>
      </main>
      <footer class="status">Open project...</footer>`;
  }

  private renderDialog() {
    return html`<section class="dialog" role="dialog" aria-labelledby="dialog-title">
      <div class="dialog-title">
        ${icon("efinity", 22, 20)}
        <h2 id="dialog-title">Open Project File</h2>
        <button aria-label="Close">${icon("close")}</button>
      </div>
      <div class="nav">
        <div class="nav-steps">
          <button aria-label="Back">${icon("back")}</button>
          <button aria-label="Forward">${icon("forward")}</button>
          <button aria-label="Recent">${icon("recent")}</button>
          <button aria-label="Up">${icon("up")}</button>
        </div>
        <div class="address">
          ${icon("folder", 15, 22)}
          <div class="crumbs">
            <span class="more">«</span><span>A6的固件</span>${icon("chevRight")}<span>lvds2mipi_prj_v4_discontinue_clk_v51</span>${icon("chevRight")}
          </div>
          <button class="drop" aria-label="History">${icon("chevDown")}</button>
          <button class="reload" aria-label="Refresh">${icon("refresh")}</button>
        </div>
        <div class="find">
          <input type="text" aria-label="Search" placeholder="在 lvds2mipi_prj_v4_disconti..." />
          <button aria-label="Search">${icon("search")}</button>
        </div>
      </div>
      <div class="commands">
        <button>组织 ${icon("caret")}</button>
        <button class="new">新建文件夹</button>
        <button class="view" aria-label="View">${icon("view")} ${icon("caret")}</button>
        <button class="preview" aria-label="Preview pane">${icon("pane")}</button>
        <button aria-label="Help">${icon("help")}</button>
      </div>
      <div class="browse">
        <ul class="tree">
          ${places.map((p, i) => html`<li class=${classMap({ top: !!p.top, gap: !!p.gap, selected: i === this.place })}>
            <button @click=${() => (this.place = i)}>${icon(p.icon)}<span>${p.label}</span></button>
          </li>`)}
        </ul>
        <div class="vscroll">${icon("scrollUp")}<div class="thumb"></div>${icon("scrollDown")}</div>
        <div class="listing">
          <div class="files-wrap">
            <table class="files">
              <thead><tr><th scope="col">名称</th></tr></thead>
              <tbody>
                ${files.map((f, i) => html`<tr class=${classMap({ selected: i === this.file })}>
                  <td><button @click=${() => (this.file = i)}>
                    <span class=${classMap({ "file-icon": true, sheet: !f.folder })}>${f.folder ? icon("folder", 15, 21) : icon("edge")}</span>
                    <span>${f.name}</span>
                  </button></td>
                </tr>`)}
              </tbody>
            </table>
          </div>
          <div class="hscroll">${icon("scrollLeft")}<div class="thumb"></div>${icon("scrollRight")}</div>
        </div>
      </div>
      <div class="form">
        <label for="file-name">文件名(N):</label>
        <div class="combo">
          <input id="file-name" type="text" .value=${files[this.file].name} />
          <button aria-label="Recent names">${icon("comboDown")}</button>
        </div>
        <div class="filter">
          <select aria-label="File type"><option>Project File, project_name.xm</option></select>
          ${icon("comboDown")}
        </div>
        <div class="actions">
          <button class="primary">打开(O)</button>
          <button>取消</button>
        </div>
        <span class="grip">${icon("grip")}</span>
      </div>
    </section>`;
  }

  private renderTaskbar() {
    return html`<nav class="taskbar">
      <button class="start" aria-label="Start">${icon("windows")}</button>
      ${taskGroups.map((g) => html`<div class="group ${g.name}">
        ${g.tasks.map((t) => html`<button class="task ${t.mode ?? ""}" aria-label=${t.icon}>${icon(t.icon)}</button>`)}
      </div>`)}
      <div class="tray">
        <button class="weather">${icon("weather")}<span>22°C</span></button>
        <button aria-label="Hidden icons">${icon("trayUp")}</button>
        <button aria-label="Messages">${icon("wecom", 24, 24)}</button>
        <button aria-label="Network">${icon("globe")}</button>
        <button aria-label="Battery">${icon("battery")}</button>
        <button aria-label="Volume">${icon("speaker")}</button>
        <button class="mode" aria-label="Input mode">${icon("imeTray")}</button>
        <button aria-label="Input method">${icon("sogou", 26, 24)}</button>
        <button class="clock">17:43<br />2025/11/10</button>
        <button class="notice" aria-label="Notifications">${icon("notice")}<b>19</b></button>
      </div>
      <div class="peek"></div>
    </nav>`;
  }

  private renderIme() {
    return html`<div class="ime">
      <button class="brand" aria-label="Input method">${icon("sogou")}</button>
      <button aria-label="Language">${icon("imeZh")}</button>
      <button aria-label="Punctuation">${icon("punct")}</button>
      <button aria-label="Voice">${icon("mic")}</button>
      <button class="keys" aria-label="Keyboard">${icon("keyboard")}</button>
      <button class="dress" aria-label="Skins">${icon("shirt")}</button>
      <button class="more" aria-label="Tools">${icon("apps")}</button>
      <button aria-label="Assistant">${icon("mascot")}</button>
    </div>`;
  }

  render() {
    return html`<div class="desktop">
      ${this.renderDefs()} ${this.renderMainWindow()} ${this.renderTaskbar()} ${this.renderDialog()} ${this.renderIme()}
    </div>`;
  }
}
